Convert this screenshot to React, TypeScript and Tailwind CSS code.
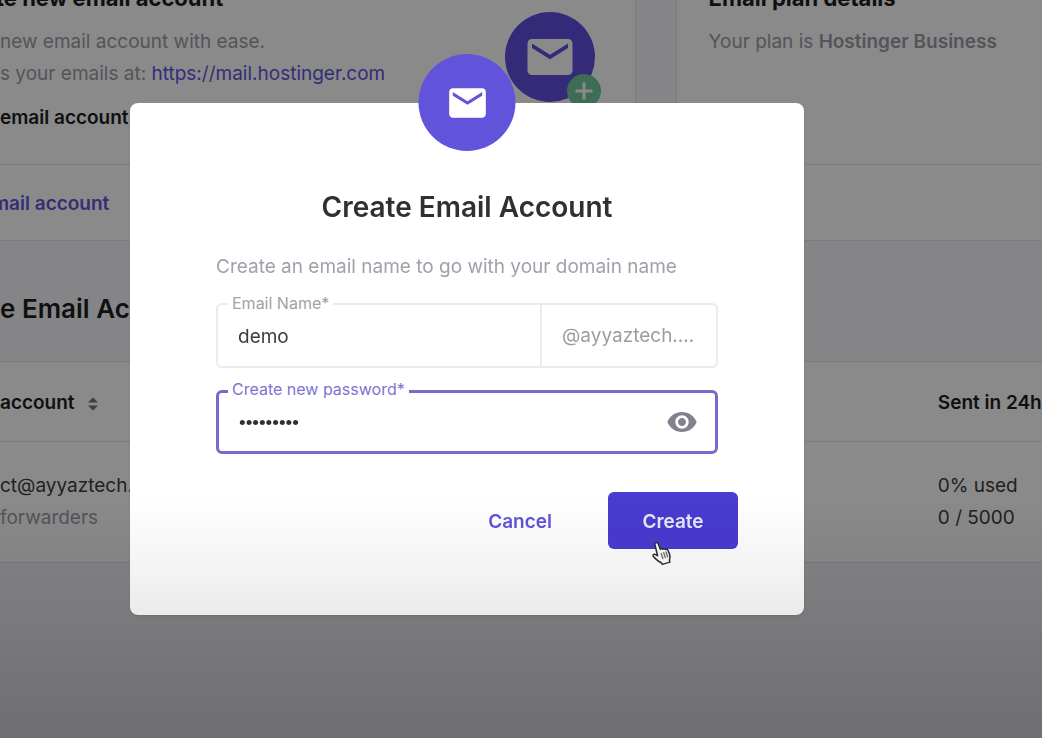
import React, { useState } from 'react';
import { MdEmail, MdVisibility, MdVisibilityOff } from 'react-icons/md';

const DOMAIN = '@ayyaztech....';

const SortIcon: React.FC = () => (
  <svg width="12" height="14" viewBox="0 0 12 14" fill="#6e6f80" aria-hidden="true">
    <path d="M6 0.5 11 5.6H1z" />
    <path d="M6 13.5 1 8.4h10z" />
  </svg>
);

// Hand pointer resting on the Create button
const HandCursor: React.FC = () => (
  <svg width="22" height="25" viewBox="0 0 22 25" aria-hidden="true">
    <path
      d="M4.6 1.8c1.2-.6 2.2 0 2.7 1.2l2 5.2c.5-.8 2-.9 2.6.1.7-.7 2-.7 2.6.2.9-.5 2.1-.2 2.5.8l1.6 3.9c.8 2.2.6 4.3-.2 6.2l.6 1.7-7.8 2.3-.9-1.6c-2.6-.9-4.8-3.1-7.1-5.4-1-.9-1.6-2-.8-2.8.8-.7 2-.3 3 .4l1.2.8L4 4C3.6 3 3.8 2.2 4.6 1.8z"
      fill="#f4f4f4"
      stroke="#2c2c30"
      strokeWidth="1.5"
      strokeLinejoin="round"
    />
    <path d="M10.2 12.6l1.7 4.8M12.7 11.8l1.7 4.8M15.1 11l1.6 4.8" stroke="#777" strokeWidth="1.5" strokeLinecap="round" />
  </svg>
);

const DashboardPage: React.FC = () => (
  <main className="min-h-screen bg-[#f5f5fb] text-[19px] text-[#3c3d42]">
    <div className="flex gap-10">
      <section className="flex w-[61%] flex-none flex-col border-r border-b border-[#e4e4ea] bg-white">
        <div className="-mt-4 flex justify-between pr-10">
          <div className="pb-[30px]">
            <h2 className="-ml-1 text-[22px] leading-7 font-bold text-[#1d1e20]">te new email account</h2>
            <p className="mt-3.5 leading-8 text-[#9b9ca8]">
              new email account with ease.
              <br />
              s your emails at: <a href="https://mail.hostinger.com" className="text-[#6254da]">https://mail.hostinger.com</a>
            </p>
            <p className="mt-3 leading-8 font-semibold text-[#1d1e20]">email account</p>
          </div>
          <div className="relative mt-7 flex size-[90px] flex-none items-center justify-center rounded-full bg-[#6050de] text-white">
            <MdEmail size={54} />
            <span className="absolute -right-1.5 top-[62px] flex size-[34px] items-center justify-center rounded-full bg-[#73c89f]">
              <svg width="18" height="18" viewBox="0 0 18 18" stroke="currentColor" strokeWidth="3" aria-hidden="true">
                <path d="M9 0.5v17M0.5 9h17" />
              </svg>
            </span>
          </div>
        </div>
        <div className="mt-auto flex h-[76px] items-center border-t border-[#e4e4ea] pt-1">
          <a href="#create" className="-ml-2 font-semibold text-[#6254da]">mail account</a>
        </div>
      </section>

      <section className="flex flex-1 flex-col border-b border-l border-[#e4e4ea] bg-white">
        <div className="-mt-4 flex-1 pl-8">
          <h2 className="text-[22px] leading-7 font-bold text-[#1d1e20]">Email plan details</h2>
          <p className="mt-3.5 leading-8 text-[#9b9ca8]">
            Your plan is <strong className="font-semibold">Hostinger Business</strong>
          </p>
        </div>
        <div className="h-[76px] border-t border-[#e4e4ea]" />
      </section>
    </div>

    <h2 className="pt-12 pb-8 text-[26px] leading-10 font-semibold text-[#1d1e20]">e Email Accounts</h2>

    <table className="w-full table-fixed border-y border-[#e4e4ea] bg-white text-left">
      <thead>
        <tr className="h-20 border-b border-[#e4e4ea] text-[#1d1e20]">
          <th className="w-[90%] pt-1 font-semibold">
            <span className="flex items-center gap-3">
              account <SortIcon />
            </span>
          </th>
          <th className="pt-1 font-semibold whitespace-nowrap">Sent in 24h</th>
        </tr>
      </thead>
      <tbody className="leading-8">
        <tr>
          <td className="py-7">
            ct@ayyaztech.com
            <br />
            <span className="text-[#9b9ca8]">forwarders</span>
          </td>
          <td className="py-7 whitespace-nowrap">
            0% used
            <br />0 / 5000
          </td>
        </tr>
      </tbody>
    </table>
  </main>
);

const CreateAccountModal: React.FC = () => {
  const [name, setName] = useState('demo');
  const [password, setPassword] = useState('demo12345');
  const [visible, setVisible] = useState(false);

  return (
    <form
      role="dialog"
      aria-labelledby="modal-title"
      onSubmit={(e) => e.preventDefault()}
      className="relative w-full max-w-[674px] rounded-lg bg-white pt-[86px] pb-[66px] shadow-sm"
    >
      <div className="absolute -top-[49px] left-1/2 flex size-[97px] -translate-x-1/2 items-center justify-center rounded-full bg-[#6254da] text-white">
        <MdEmail size={44} />
      </div>

      <h1 id="modal-title" className="text-center text-[28px] leading-9 font-semibold text-[#2f3033]">
        Create Email Account
      </h1>

      <div className="mt-[26px] px-[86px]">
        <p className="text-[19px] leading-8 whitespace-nowrap text-[#a0a1aa]">Create an email name to go with your domain name</p>

        <div className="relative mt-5 flex h-[65px] items-stretch rounded-md border-2 border-[#ebebed]">
          <label htmlFor="email-name" className="absolute -top-3 left-2.5 bg-white px-1 text-[16px] leading-5 text-[#a0a1aa]">
            Email Name*
          </label>
          <input
            id="email-name"
            type="text"
            value={name}
            onChange={(e) => setName(e.target.value)}
            className="min-w-0 flex-1 px-5 pt-1 text-[19px] text-[#3c3d42] outline-none"
          />
          <span className="flex w-44 items-center border-l-2 border-[#ebebed] pt-0.5 pl-5 text-[19px] text-[#9b9ca5]">{DOMAIN}</span>
        </div>

        <div className="relative mt-[22px] flex h-16 items-center rounded-md border-3 border-[#756bcb]">
          <label htmlFor="password" className="absolute -top-3.5 left-[9px] bg-white px-1 text-[16px] leading-5 text-[#7d73d2]">
            Create new password*
          </label>
          <input
            id="password"
            type={visible ? 'text' : 'password'}
            value={password}
            onChange={(e) => setPassword(e.target.value)}
            className="h-full min-w-0 flex-1 px-5 pt-0.5 font-['Liberation_Sans',sans-serif] text-[19px] text-[#2f3033] outline-none"
          />
          <button
            type="button"
            aria-label="Toggle password visibility"
            onClick={() => setVisible(!visible)}
            className="mr-[17px] text-[#82828f]"
          >
            {visible ? <MdVisibilityOff size={32} /> : <MdVisibility size={32} />}
          </button>
        </div>
      </div>

      <div className="mt-[38px] flex justify-end gap-6 px-[66px] text-[19px] font-semibold">
        <button type="button" className="px-8 pt-1 text-[#6254da]">
          Cancel
        </button>
        <button type="submit" className="h-[57px] w-[130px] rounded-md bg-[#4a3bd1] pt-1 text-[#e8e6fa]">
          Create
        </button>
      </div>
    </form>
  );
};

const App: React.FC = () => {
  return (
    <div className="relative min-h-screen overflow-hidden font-['Inter',sans-serif]">
      <DashboardPage />

      <div className="fixed inset-0 z-10 flex items-start justify-center bg-black/46 pt-[103px] pr-[108px]">
        <CreateAccountModal />
      </div>

      {/* Shade along the lower edge */}
      <div className="pointer-events-none fixed inset-x-0 bottom-0 z-20 h-60 bg-linear-to-b from-transparent to-black/16" />

      <div className="pointer-events-none fixed top-[541px] left-[651px] z-30">
        <HandCursor />
      </div>
    </div>
  );
};

export default App;
